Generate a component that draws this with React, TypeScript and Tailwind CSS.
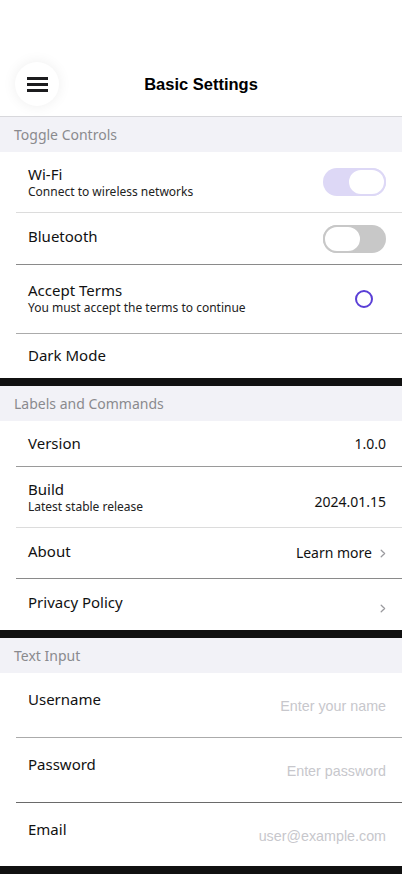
import React from "react";

const sans = "font-['Noto_Sans','Open_Sans',sans-serif]";

function SectionHeader({ title }: { title: string }) {
  return (
    <div className={`h-[35px] bg-[#f2f2f7] pl-[14px] flex items-center text-[14px] text-[#8a8a8e] ${sans}`}>
      {title}
    </div>
  );
}

function Chevron() {
  return (
    <svg width="6" height="9" viewBox="0 0 6 9" className="ml-[8px] mt-[3px]">
      <path d="M1.2 1.2 L4.6 4.5 L1.2 7.8" fill="none" stroke="#9a9a9e" strokeWidth="1.3" strokeLinecap="round" strokeLinejoin="round" />
    </svg>
  );
}

function Toggle({ on }: { on: boolean }) {
  return on ? (
    <div className="w-[63px] h-[28px] rounded-full bg-[#ddd8f6] flex justify-end">
      <div className="w-[39px] h-[28px] rounded-full bg-white border-2 border-[#ddd8f6]" />
    </div>
  ) : (
    <div className="w-[63px] h-[28px] rounded-full bg-[#c8c8c8] flex justify-start">
      <div className="w-[39px] h-[28px] rounded-full bg-white border-2 border-[#c8c8c8]" />
    </div>
  );
}

function Row({
  title,
  subtitle,
  right,
  height,
  border,
  shift,
}: {
  title: string;
  subtitle?: string;
  right?: React.ReactNode;
  height: string;
  border?: string;
  shift?: string;
}) {
  return (
    <div className={`ml-[16px] ${height} ${border ?? ""} flex items-center pl-[12px] pr-[16px] ${sans}`}>
      <div className={`flex-1 flex flex-col ${shift ?? ""}`}>
        <span className="text-[15px] leading-[20px] text-[#111]">{title}</span>
        {subtitle && <span className="text-[12px] leading-[16px] text-[#222]">{subtitle}</span>}
      </div>
      {right}
    </div>
  );
}

function InputRow({ label, placeholder, height, border }: { label: string; placeholder: string; height: string; border?: string }) {
  return (
    <div className={`ml-[16px] ${height} ${border ?? ""} flex items-start pl-[12px] pr-[16px] pt-[16px] ${sans}`}>
      <span className="flex-1 text-[15px] leading-[21px] text-[#111]">{label}</span>
      <span className="mt-[7px] text-[14.3px] leading-[20px] text-[#c7c7cc] font-['Liberation_Sans',Arial,sans-serif]">{placeholder}</span>
    </div>
  );
}

export default function App() {
  return (
    <div className="w-[402px] h-[874px] bg-white overflow-hidden">
      {/* Header */}
      <div className="pt-[55px] h-[117px] border-b border-[#d8d8dc] relative flex items-start justify-center">
        <div className="absolute left-[15px] top-[62px] w-[44px] h-[44px] rounded-full bg-white shadow-[0_0_14px_rgba(0,0,0,0.07)] flex flex-col items-center justify-center gap-[3px]">
          <div className="w-[21px] h-[3px] bg-[#1c1c1e]" />
          <div className="w-[21px] h-[3px] bg-[#1c1c1e]" />
          <div className="w-[21px] h-[3px] bg-[#1c1c1e]" />
        </div>
        <h1 className="mt-[18px] text-[16.5px] leading-[22px] font-bold text-black font-['Liberation_Sans',Arial,sans-serif]">
          Basic Settings
        </h1>
      </div>

      <SectionHeader title="Toggle Controls" />
      <Row title="Wi-Fi" subtitle="Connect to wireless networks" height="h-[61px]" border="border-b border-[#dcdcdc]" right={<Toggle on />} />
      <Row title="Bluetooth" height="h-[52px]" border="border-b border-[#8a8a8a]" shift="-mt-[6px]" right={<Toggle on={false} />} />
      <Row
        title="Accept Terms"
        subtitle="You must accept the terms to continue"
        height="h-[69px]"
        border="border-b border-[#ababab]"
        shift="-mt-[2px]"
        right={<div className="w-[18px] h-[18px] rounded-full border-2 border-[#5a3fd6] mr-[13px]" />}
      />
      <Row title="Dark Mode" height="h-[44px]" shift="-mt-[2px]" />
      <div className="h-[8px] bg-[#111]" />

      <SectionHeader title="Labels and Commands" />
      <Row title="Version" height="h-[46px]" border="border-b border-[#9a9a9a]" shift="-mt-[2px]" right={<span className="text-[14px] text-[#111]">1.0.0</span>} />
      <Row
        title="Build"
        subtitle="Latest stable release"
        height="h-[61px]"
        border="border-b border-[#dcdcdc]"
        right={<span className="text-[14px] text-[#111] mt-[8px]">2024.01.15</span>}
      />
      <Row
        title="About"
        height="h-[51px]"
        border="border-b border-[#8a8a8a]"
        shift="-mt-[4px]"
        right={
          <div className="flex items-center -mt-[2px]">
            <span className="text-[14px] text-[#111]">Learn more</span>
            <Chevron />
          </div>
        }
      />
      <Row title="Privacy Policy" height="h-[51px]" shift="-mt-[6px]" right={<div className="mt-[4px]"><Chevron /></div>} />
      <div className="h-[8px] bg-[#111]" />

      <SectionHeader title="Text Input" />
      <InputRow label="Username" placeholder="Enter your name" height="h-[65px]" border="border-b border-[#ababab]" />
      <InputRow label="Password" placeholder="Enter password" height="h-[65px]" border="border-b border-[#6a6a6a]" />
      <InputRow label="Email" placeholder="user@example.com" height="h-[63px]" />
      <div className="h-[8px] bg-[#111]" />
    </div>
  );
}
